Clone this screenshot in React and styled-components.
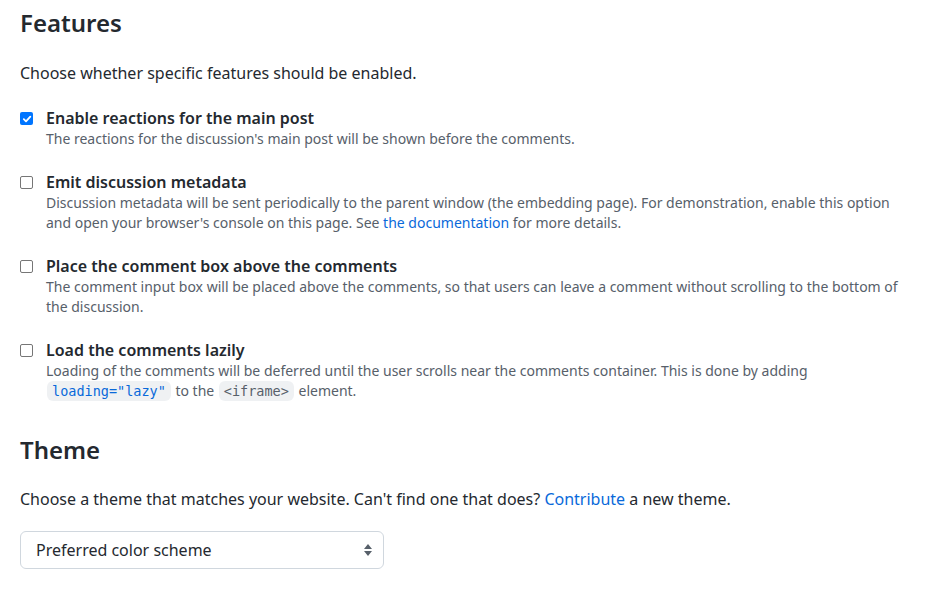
import React from "react";
import styled, { createGlobalStyle } from "styled-components";

const Global = createGlobalStyle`
  body{
    margin:0;
    background:#fff;
    font-family:"Segoe UI","Noto Sans",Helvetica,Arial,sans-serif;
    color:#24292f;
  }
`
const Page = styled.div`
  padding:8px 20px 0 20px;
  width:898px;
`
const H2 = styled.h2`
  font-size:24px;
  font-weight:600;
  line-height:1.25;
  margin:${(p)=>p.top}px 0 0 0;
`
const P = styled.p`
  font-size:16px;
  line-height:24px;
  margin:${(p)=>p.top}px 0 0 0;
`
const List = styled.div`
  display:flex;
  flex-direction:column;
  gap:23px;
  margin-top:23px;
`
const Item = styled.label`
  display:grid;
  grid-template-columns:13px 1fr;
  column-gap:13px;
`
const Box = styled.span`
  width:13px;
  height:13px;
  margin-top:4px;
  box-sizing:border-box;
  border-radius:2px;
  border:${(p)=>p.checked?"none":"1.5px solid #767676"};
  background:${(p)=>p.checked?"#0075ff":"#fff"};
  display:flex;
  align-items:center;
  justify-content:center;
`
const Label = styled.div`
  font-size:16px;
  font-weight:600;
  line-height:21px;
`
const Desc = styled.div`
  font-size:14px;
  line-height:20px;
  color:#57606a;
  grid-column:2;
`
const Link = styled.a`
  color:#0969da;
  text-decoration:none;
`
const Code = styled.code`
  font-family:"DejaVu Sans Mono","Liberation Mono",monospace;
  font-size:13.5px;
  line-height:20px;
  padding:2px 5px;
  margin:0 1px;
  border-radius:6px;
  background:rgba(175,184,193,0.2);
  color:${(p)=>p.blue?"#0969da":"#57606a"};
`
const Select = styled.div`
  margin-top:20px;
  width:364px;
  height:38px;
  box-sizing:border-box;
  border:1px solid #d0d7de;
  border-radius:6px;
  display:flex;
  align-items:center;
  justify-content:space-between;
  padding:0 10px 0 15px;
  font-size:16px;
  color:#24292f;
`

const Check = ({checked}) => (
  <Box checked={checked}>
    {checked && (
      <svg width="10" height="10" viewBox="0 0 10 10">
        <path d="M1.8 5.2 L4 7.3 L8.3 2.6" fill="none" stroke="#fff" strokeWidth="1.8" strokeLinecap="round" strokeLinejoin="round"/>
      </svg>
    )}
  </Box>
)

const App = () => (
  <>
    <Global/>
    <Page>
      <H2 top={0}>Features</H2>
      <P top={23}>Choose whether specific features should be enabled.</P>
      <List>
        <Item>
          <Check checked/>
          <Label>Enable reactions for the main post</Label>
          <Desc>The reactions for the discussion's main post will be shown before the comments.</Desc>
        </Item>
        <Item>
          <Check/>
          <Label>Emit discussion metadata</Label>
          <Desc>Discussion metadata will be sent periodically to the parent window (the embedding page). For demonstration, enable this option and open your browser's console on this page. See <Link href="#">the documentation</Link> for more details.</Desc>
        </Item>
        <Item>
          <Check/>
          <Label>Place the comment box above the comments</Label>
          <Desc>The comment input box will be placed above the comments, so that users can leave a comment without scrolling to the bottom of the discussion.</Desc>
        </Item>
        <Item>
          <Check/>
          <Label>Load the comments lazily</Label>
          <Desc>Loading of the comments will be deferred until the user scrolls near the comments container. This is done by adding <Code blue>loading="lazy"</Code> to the <Code>&lt;iframe&gt;</Code> element.</Desc>
        </Item>
      </List>
      <H2 top={34}>Theme</H2>
      <P top={22}>Choose a theme that matches your website. Can't find one that does? <Link href="#">Contribute</Link> a new theme.</P>
      <Select>
        <span>Preferred color scheme</span>
        <svg width="10" height="14" viewBox="0 0 10 14">
          <path d="M5 1 L9 6 H1 Z M1 8 H9 L5 13 Z" fill="#57606a"/>
        </svg>
      </Select>
    </Page>
  </>
)

export default App
